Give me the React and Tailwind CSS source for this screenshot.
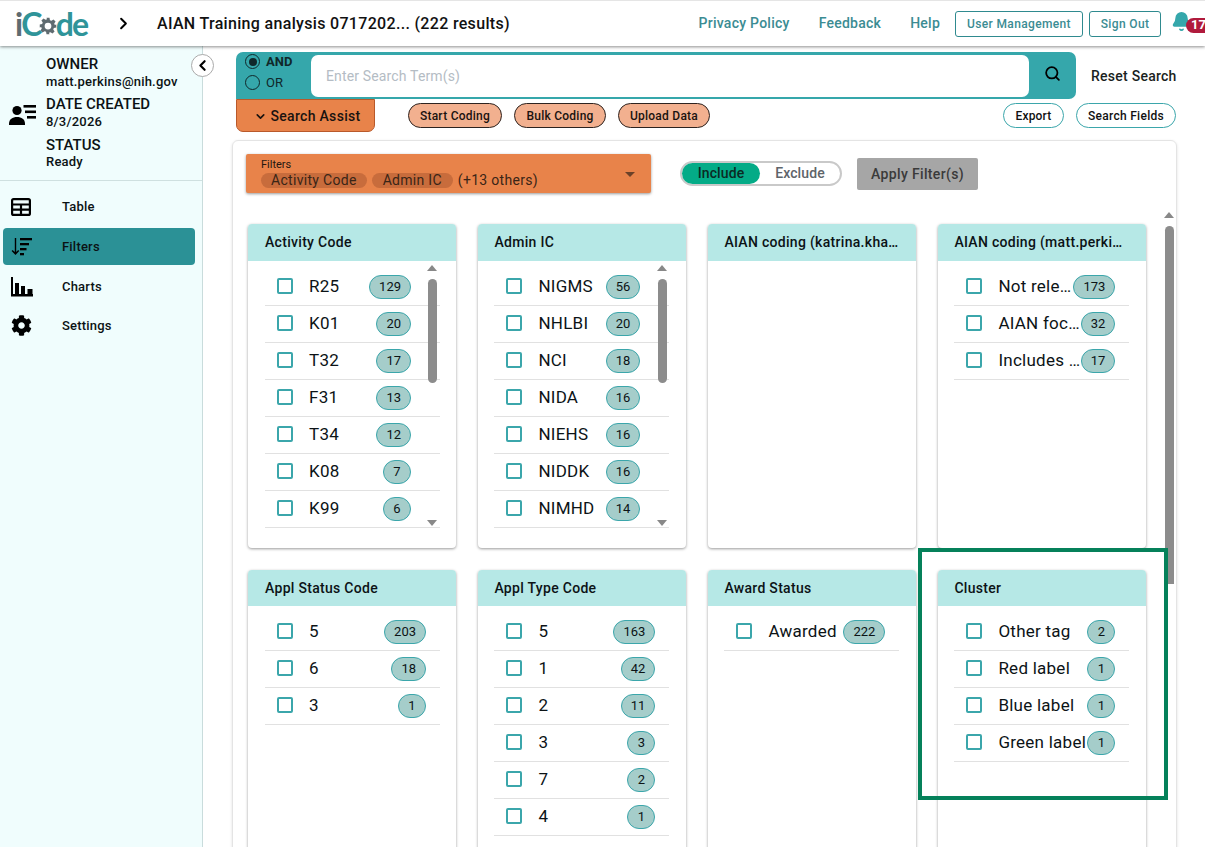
import { Bell, ChevronDown, ChevronLeft, ChevronRight, Search } from 'lucide-react';
import { FaCog } from 'react-icons/fa';

const cardsTop = [
  { title: 'Activity Code', scroll: true, items: [['R25', 129], ['K01', 20], ['T32', 17], ['F31', 13], ['T34', 12], ['K08', 7], ['K99', 6]] },
  { title: 'Admin IC', scroll: true, items: [['NIGMS', 56], ['NHLBI', 20], ['NCI', 18], ['NIDA', 16], ['NIEHS', 16], ['NIDDK', 16], ['NIMHD', 14]] },
  { title: 'AIAN coding (katrina.kha…', items: [] },
  { title: 'AIAN coding (matt.perki…', items: [['Not rele…', 173], ['AIAN foc…', 32], ['Includes …', 17]] },
];

const cardsBottom = [
  { title: 'Appl Status Code', items: [['5', 203], ['6', 18], ['3', 1]] },
  { title: 'Appl Type Code', items: [['5', 163], ['1', 42], ['2', 11], ['3', 3], ['7', 2], ['4', 1]] },
  { title: 'Award Status', items: [['Awarded', 222]] },
  { title: 'Cluster', items: [['Other tag', 2], ['Red label', 1], ['Blue label', 1], ['Green label', 1]] },
];

function Gear({ className }) {
  return (
    <svg viewBox="0 0 24 24" className={className} fill="#5f6b70">
      <path d="M10 1h4l.6 3.2 2 .8 2.7-1.8 2.8 2.8-1.8 2.7.8 2L23 10v4l-3.2.6-.8 2 1.8 2.7-2.8 2.8-2.7-1.8-2 .8L14 23h-4l-.6-3.2-2-.8-2.7 1.8-2.8-2.8 1.8-2.7-.8-2L1 14v-4l3.2-.6.8-2-1.8-2.7 2.8-2.8 2.7 1.8 2-.8zM12 7.5a4.5 4.5 0 1 0 0 9 4.5 4.5 0 0 0 0-9z" />
    </svg>
  );
}

function ContactIcon() {
  return (
    <svg viewBox="0 0 28 24" className="h-[24px] w-[28px]" fill="black">
      <circle cx="8" cy="8.5" r="4.6" />
      <path d="M0 22c0-5 3.500-7 8-7s8 2 8 7v1H0z" />
      <rect x="14.500" y="3" width="12.500" height="2.600" />
      <rect x="16" y="8.500" width="11" height="2.600" />
      <rect x="18" y="14" width="9" height="2.600" />
    </svg>
  );
}

function TableIcon() {
  return (
    <svg viewBox="0 0 20 18" className="h-[18px] w-[20px]" fill="none" stroke="black" strokeWidth="2.200">
      <rect x="1.100" y="1.100" width="17.800" height="15.800" rx="1.500" />
      <path d="M1 6.500h18M1 11.700h18M10 6v11" />
    </svg>
  );
}

function FilterIcon() {
  return (
    <svg viewBox="0 0 22 20" className="h-[20px] w-[22px]" fill="black">
      <path d="M3.800 1h1.400v14l2-2 1 1L4.500 18 .6 14l1-1 2.200 2z" />
      <rect x="9" y="1" width="12" height="2.300" />
      <rect x="9" y="6" width="9" height="2.300" />
      <rect x="9" y="11" width="6.500" height="2.300" />
      <rect x="9" y="16" width="4" height="2.300" />
    </svg>
  );
}

function ChartIcon() {
  return (
    <svg viewBox="0 0 22 20" className="h-[20px] w-[22px]" fill="black">
      <rect x="0" y="0" width="2" height="19" />
      <rect x="0" y="17" width="22" height="2.500" />
      <rect x="4" y="6" width="4" height="12" />
      <rect x="10" y="9" width="4" height="9" />
      <rect x="16.500" y="12" width="5" height="6" />
    </svg>
  );
}

function NavItem({ icon, label, active }) {
  return (
    <div className={`ml-[3px] mr-[7px] flex h-[37px] items-center rounded-[4px] pl-[8px] ${active ? 'bg-[#2b9196]' : ''}`}>
      <span className="flex w-[51px] items-center">{icon}</span>
      <span className="text-[13px] font-medium tracking-[0.2px] text-[#0b1214]">{label}</span>
    </div>
  );
}

function Radio({ checked, label }) {
  return (
    <div className="flex h-[21px] items-center gap-[6px]">
      <span className="flex h-[15px] w-[15px] items-center justify-center rounded-full border-[1.500px] border-[#10282a]">
        {checked && <span className="h-[8px] w-[8px] rounded-full bg-[#10282a]" />}
      </span>
      <span className={`text-[13px] ${checked ? 'font-bold text-[#10282a]' : 'font-normal text-[#10282a]'}`}>{label}</span>
    </div>
  );
}

function OrangeBtn({ children, w }) {
  return (
    <button className={`flex h-[25px] items-center justify-center rounded-full border border-[#2d2320] bg-[#f2b08f] text-[12px] font-medium tracking-[0.25px] text-[#1a1310] ${w}`}>
      {children}
    </button>
  );
}

function Row({ label, count, badgeGap }) {
  return (
    <div className="flex h-[37px] items-center border-b border-[#e1e1e1]">
      <span className="mb-[2px] ml-[12px] h-[16px] w-[16px] shrink-0 rounded-[2px] border-2 border-[#3ba6ab]" />
      <span className="ml-[16px] whitespace-nowrap text-[17px] tracking-[0.25px] text-[#0c1316]">{label}</span>
      <span className={`ml-auto flex h-[24px] min-w-[28px] shrink-0 items-center justify-center rounded-full border border-[#3ba6ab] bg-[#a5cdca] px-[9px] text-[13px] text-[#0c1316] ${badgeGap}`}>
        {count}
      </span>
    </div>
  );
}

function FilterCard({ card, height, topRow, first }) {
  return (
    <div className={`flex w-[208px] shrink-0 flex-col overflow-hidden rounded-[4px] bg-white shadow-[0_1px_3px_rgba(0,0,0,0.4)] ${height}`}>
      <div className={`flex shrink-0 items-center whitespace-nowrap bg-[#b6e8e6] text-[14px] font-medium tracking-[0.3px] text-[#0c1316] ${topRow ? 'h-[37px]' : 'h-[36px]'} ${first ? 'pl-[17px]' : 'pl-[16.4px]'}`}>
        {card.title}
      </div>
      <div className="relative flex min-h-0 flex-1">
        <div className={`w-[175px] pt-[8px] ${first ? 'ml-[17px]' : 'ml-[16.4px]'}`}>
          {card.items.map(([label, count]) => (
            <Row key={label} label={label} count={count} badgeGap={card.scroll ? 'mr-[29px]' : 'mr-[14px]'} />
          ))}
        </div>
        {card.scroll && (
          <div className="absolute left-[179px] top-[4px] flex h-[261px] w-[10px] flex-col items-center">
            <span className="h-0 w-0 border-x-[5px] border-b-[6px] border-x-transparent border-b-[#888]" />
            <span className="mt-[8px] h-[104px] w-[9px] rounded-full bg-[#8c8c8c]" />
            <span className="mt-auto h-0 w-0 border-x-[5px] border-t-[6px] border-x-transparent border-t-[#888]" />
          </div>
        )}
      </div>
    </div>
  );
}

export default function App() {
  return (
    <div className="relative flex h-[847px] w-[1205px] flex-col overflow-hidden bg-white font-['Roboto',sans-serif]">
      <header className="z-10 flex h-[46px] shrink-0 items-center border-t border-[#e5e5e5] bg-white shadow-[0_1px_3px_rgba(0,0,0,0.45)]">
        <div className="ml-[15px] flex w-[97px] items-center font-['Lato',sans-serif] text-[32px] font-bold leading-none tracking-[-1.800px] text-[#2f9499]">
          <span className="text-[#5f6b70]">i</span>
          <span>C</span>
          <Gear className="ml-[-2px] mr-[-1px] mt-[5px] h-[18px] w-[18px]" />
          <span>de</span>
        </div>
        <ChevronRight className="ml-[2px] h-[19px] w-[19px] text-black" strokeWidth={2.500} />
        <div className="ml-[24px] whitespace-nowrap text-[16px] font-medium tracking-[0.32px] text-[#111]">AIAN Training analysis 0717202... (222 results)</div>
        <nav className="ml-auto flex items-center text-[14px] font-medium tracking-[0.25px] text-[#3b8c93]">
          <span>Privacy Policy</span>
          <span className="ml-[29px]">Feedback</span>
          <span className="ml-[29px]">Help</span>
          <button className="ml-[15px] h-[26px] w-[128px] rounded-[3px] border border-[#2f8a8f] text-[12px] tracking-[0.35px]">User Management</button>
          <button className="ml-[6px] h-[26px] w-[72px] rounded-[3px] border border-[#2f8a8f] text-[12px] tracking-[0.35px]">Sign Out</button>
        </nav>
        <div className="relative ml-[10px] h-[30px] w-[34px] shrink-0">
          <Bell className="absolute left-[0px] top-[2px] h-[21px] w-[21px] fill-[#35a7ab] text-[#35a7ab]" />
          <span className="absolute left-[15px] top-[9px] flex h-[15px] w-[30px] items-center rounded-full bg-[#b01a3c] pl-[5px] text-[13px] font-bold text-white">17</span>
        </div>
      </header>

      <div className="flex min-h-0 flex-1">
        <aside className="relative w-[203px] shrink-0 border-r border-[#c9dcdc] bg-[#f0fdfd]">
          <div className="flex h-[135px] border-b border-[#cfe0e0]">
            <span className="ml-[9px] mt-[56px] h-[24px]"><ContactIcon /></span>
            <div className="ml-[9px] pt-[9px] text-[#0b1214]">
              <div className="text-[15px] font-medium leading-[19px]">OWNER</div>
              <div className="text-[13px] font-medium leading-[16px] tracking-[0.2px]">matt.perkins@nih.gov</div>
              <div className="mt-[5px] text-[15px] font-medium leading-[19px]">DATE CREATED</div>
              <div className="text-[13px] font-medium leading-[16px] tracking-[0.2px]">8/3/2026</div>
              <div className="mt-[6px] text-[15px] font-medium leading-[19px]">STATUS</div>
              <div className="text-[13px] font-medium leading-[13px] tracking-[0.2px]">Ready</div>
            </div>
          </div>
          <div className="pt-[7px]">
            <NavItem icon={<TableIcon />} label="Table" />
            <div className="mt-[3px]"><NavItem icon={<FilterIcon />} label="Filters" active /></div>
            <div className="mt-[3px]"><NavItem icon={<ChartIcon />} label="Charts" /></div>
            <div className="mt-[2px]"><NavItem icon={<FaCog className="h-[21px] w-[21px] text-black" />} label="Settings" /></div>
          </div>
          <button className="absolute left-[191px] top-[8px] flex h-[23px] w-[23px] items-center justify-center rounded-full border border-[#aaa] bg-white">
            <ChevronLeft className="h-[17px] w-[17px] text-black" strokeWidth={3} />
          </button>
        </aside>

        <main className="min-w-0 flex-1">
          <div className="ml-[33px] flex pt-[6px]">
            <div className="flex h-[47px] w-[840px] rounded-[7px] rounded-bl-none bg-[#35a7ab]">
              <div className="mt-[-1px] w-[75px] pl-[9px]">
                <Radio checked label="AND" />
                <Radio label="OR" />
              </div>
              <div className="mb-[2px] mt-[3px] flex w-[718px] items-center rounded-[7px] bg-white pl-[15px] text-[14px] tracking-[0.15px] text-[#b4bcc4]">
                Enter Search Term(s)
              </div>
              <div className="flex flex-1 items-center justify-center">
                <Search className="mb-[4px] h-[17px] w-[17px] text-black" strokeWidth={2.500} />
              </div>
            </div>
            <span className="ml-[15px] mt-[14px] text-[14px] font-medium tracking-[0.25px] text-[#1a1f22]">Reset Search</span>
          </div>
          <div className="ml-[33px] flex items-start">
            <button className="flex h-[33px] w-[139px] items-center justify-center gap-[4px] rounded-b-[7px] border border-[#b9592a] bg-[#e8834a] pl-[3px] pt-[2px] text-[14px] font-medium tracking-[0.3px] text-[#1a1310]">
              <ChevronDown className="h-[13px] w-[13px]" strokeWidth={3} />
              Search Assist
            </button>
            <div className="ml-[33px] mt-[4px] flex gap-[12px]">
              <OrangeBtn w="w-[94px]">Start Coding</OrangeBtn>
              <OrangeBtn w="w-[92px]">Bulk Coding</OrangeBtn>
              <OrangeBtn w="w-[92px]">Upload Data</OrangeBtn>
            </div>
            <div className="ml-auto mr-[29px] mt-[4px] flex gap-[12px]">
              <button className="h-[25px] w-[61px] rounded-full border border-[#3ba6ab] text-[12px] font-medium tracking-[0.2px] text-[#111]">Export</button>
              <button className="h-[25px] w-[100px] rounded-full border border-[#3ba6ab] text-[12px] font-medium tracking-[0.3px] text-[#111]">Search Fields</button>
            </div>
          </div>

          <section className="ml-[29px] mr-[28px] mt-[8px] h-[720px] rounded-[6px] border border-[#e4e4e4] pl-[13px] shadow-[0_1px_3px_rgba(0,0,0,0.12)]">
            <div className="flex items-start pt-[13px]">
              <div className="relative h-[39px] w-[405px] rounded-[2px] bg-[#e8834a] pl-[15px] pt-[5px] shadow-[0_1px_3px_rgba(0,0,0,0.4)]">
                <div className="text-[11px] leading-[12px] text-[#241710]">Filters</div>
                <div className="mt-[2px] flex items-center gap-[5px] text-[14px] leading-[15px] tracking-[0.3px] text-[#3a2517]">
                  <span className="rounded-full bg-[#c86c3c] px-[10px]">Activity Code</span>
                  <span className="rounded-full bg-[#c86c3c] px-[11px]">Admin IC</span>
                  <span>(+13 others)</span>
                </div>
                <span className="absolute right-[16px] top-[18px] h-0 w-0 border-x-[5px] border-t-[5px] border-x-transparent border-t-[#6b4128]" />
              </div>
              <div className="ml-[29px] mt-[7px] flex h-[25px] w-[162px] items-center rounded-full border-2 border-[#c9c9c9] bg-white text-[14px] font-medium tracking-[0.1px]">
                <span className="flex h-[21px] w-[78px] items-center justify-center rounded-full bg-[#04ab87] text-[#0b2a23]">Include</span>
                <span className="flex-1 text-center text-[#5e6469]">Exclude</span>
              </div>
              <button className="ml-[15px] mt-[4px] h-[32px] w-[121px] rounded-[2px] bg-[#a6a6a6] text-[14px] font-medium tracking-[0.35px] text-[#3a3a3a]">Apply Filter(s)</button>
            </div>

            <div className="mt-[31px] flex">
              <div className="w-[915px]">
                <div className="ml-[2px] flex gap-[22px]">
                  {cardsTop.map((card, i) => (
                    <FilterCard key={card.title} card={card} height="h-[324px]" topRow first={i === 0} />
                  ))}
                </div>
                <div className="ml-[2px] mt-[22px] flex gap-[22px]">
                  {cardsBottom.map((card, i) => (
                    <FilterCard key={card.title} card={card} height="h-[290px]" first={i === 0} />
                  ))}
                </div>
              </div>
              <div className="ml-[3px] mt-[-12px] flex w-[10px] flex-col items-center">
                <span className="h-0 w-0 border-x-[5px] border-b-[6px] border-x-transparent border-b-[#888]" />
                <span className="mt-[8px] h-[358px] w-[9px] rounded-b-[4px] rounded-t-full bg-[#8c8c8c]" />
              </div>
            </div>
          </section>
        </main>
      </div>

      <div className="absolute left-[918px] top-[548px] h-[252px] w-[250px] border-4 border-[#05815a]" />
    </div>
  );
}
